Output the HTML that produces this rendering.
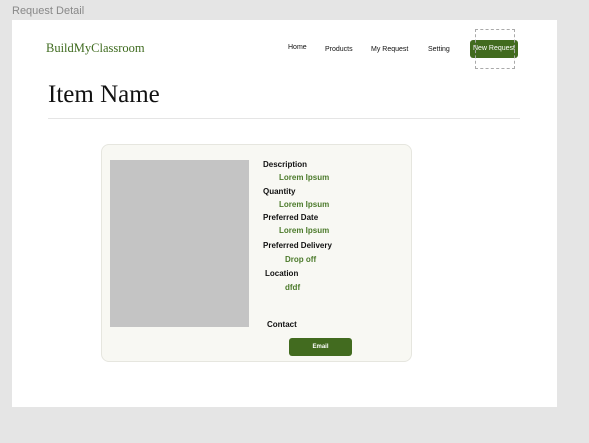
<!DOCTYPE html>
<html><head><style>
body{margin:0;width:589px;height:443px;background:#e5e5e5;position:relative;overflow:hidden;font-family:"Liberation Sans",sans-serif}
.a{position:absolute;white-space:nowrap}
.t{font-size:7px;color:#111}
.l{font-size:8px;font-weight:bold;color:#111}
.v{font-size:8px;font-weight:bold;color:#4b7a2a}
</style></head><body>
<div class="a" style="left:12px;top:5px;font-size:11px;color:#888">Request Detail</div>
<div class="a" style="left:12px;top:20px;width:545px;height:387px;background:#fff"></div>
<div class="a" style="left:46px;top:41px;font-family:'Liberation Serif',serif;font-size:12.5px;color:#3f6b1f">BuildMyClassroom</div>
<div class="a t" style="left:288px;top:44px">Home</div>
<div class="a t" style="left:325px;top:46px">Products</div>
<div class="a t" style="left:371px;top:46px">My Request</div>
<div class="a t" style="left:428px;top:46px">Setting</div>
<div class="a" style="left:470px;top:40px;width:48px;height:18px;background:#426b1f;border-radius:3px;color:#fff;font-size:7px;line-height:18px;text-align:center">New Request</div>
<div class="a" style="left:475px;top:29px;width:38px;height:38px;border:1px dashed #aaa"></div>
<div class="a" style="left:48px;top:81px;font-family:'Liberation Serif',serif;font-size:25px;color:#111">Item Name</div>
<div class="a" style="left:48px;top:118px;width:472px;height:1px;background:#e5e5e5"></div>
<div class="a" style="left:101px;top:144px;width:309px;height:216px;background:#f8f8f3;border:1px solid #e6e6df;border-radius:8px"></div>
<div class="a" style="left:110px;top:160px;width:139px;height:167px;background:#c4c4c4"></div>
<div class="a l" style="left:263px;top:160px">Description</div>
<div class="a v" style="left:279px;top:173px">Lorem Ipsum</div>
<div class="a l" style="left:263px;top:187px">Quantity</div>
<div class="a v" style="left:279px;top:200px">Lorem Ipsum</div>
<div class="a l" style="left:263px;top:213px">Preferred Date</div>
<div class="a v" style="left:279px;top:226px">Lorem Ipsum</div>
<div class="a l" style="left:263px;top:241px">Preferred Delivery</div>
<div class="a v" style="left:285px;top:255px">Drop off</div>
<div class="a l" style="left:265px;top:269px">Location</div>
<div class="a v" style="left:285px;top:283px">dfdf</div>
<div class="a l" style="left:267px;top:320px">Contact</div>
<div class="a" style="left:289px;top:338px;width:63px;height:18px;background:#426b1f;border-radius:3px;color:#fff;font-size:6px;font-weight:bold;line-height:18px;text-align:center">Email</div>
</body></html>
